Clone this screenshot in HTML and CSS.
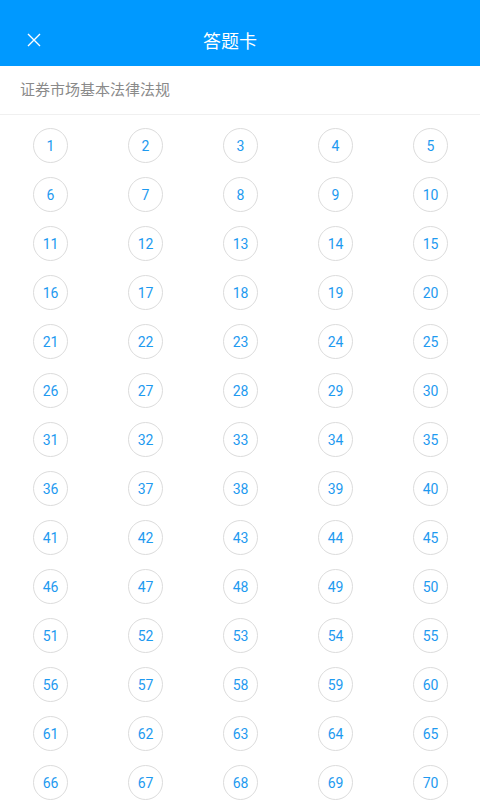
FILE: index.html
```html
<!DOCTYPE html>
<html lang="zh-CN">
<head>
    <meta charset="UTF-8">
    <meta name="viewport" content="width=device-width, initial-scale=1.0">
    <title>答题卡</title>
    <link rel="stylesheet" href="styles.css">
</head>
<body>
    <div class="header">
        <span class="close">
            <svg width="14" height="14" viewBox="0 0 14 14"><path d="M1 1L13 13M13 1L1 13" stroke="#fff" stroke-width="1.4" fill="none"/></svg>
        </span>
        <h1>答题卡</h1>
    </div>
    <div class="subject">证券市场基本法律法规</div>
    <div class="grid" id="grid"></div>

    <script>
        const grid = document.getElementById('grid');
        for (let i = 1; i <= 70; i++) {
            const cell = document.createElement('div');
            cell.className = 'cell';
            cell.innerHTML = `<span class="num">${i}</span>`;
            grid.appendChild(cell);
        }
    </script>
</body>
</html>
```

FILE: styles.css
```css
body {
    font-family: Roboto, "Noto Sans CJK SC", sans-serif;
    margin: 0;
    padding: 0;
    background: #fff;
    overflow: hidden;
}

.header {
    background: #0099ff;
    height: 66px;
    display: flex;
    align-items: center;
    justify-content: center;
    position: relative;
    padding: 14px 20px 0 0;
    box-sizing: border-box;
}

.header h1 {
    color: #fff;
    font-size: 18px;
    font-weight: normal;
    margin: 0;
}

.close {
    position: absolute;
    left: 27px;
    top: 33px;
    width: 14px;
    height: 14px;
}

.close svg {
    display: block;
}

.subject {
    height: 48px;
    line-height: 48px;
    padding-left: 20px;
    font-size: 15px;
    color: #8a8a8a;
    border-bottom: 1px solid #f0f0f0;
}

.grid {
    display: grid;
    grid-template-columns: repeat(5, 95px);
    grid-auto-rows: 49px;
    padding: 6px 0 0 3px;
}

.cell {
    display: flex;
    justify-content: center;
    align-items: center;
}

.num {
    width: 33px;
    height: 33px;
    border: 1px solid #dcdcdc;
    border-radius: 50%;
    display: flex;
    justify-content: center;
    align-items: center;
    font-size: 14px;
    color: #1e9af0;
}
```
